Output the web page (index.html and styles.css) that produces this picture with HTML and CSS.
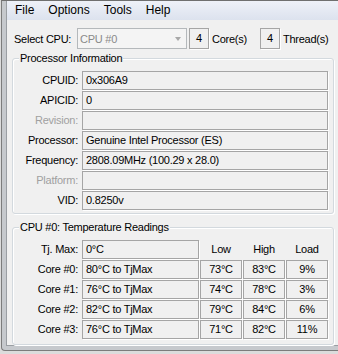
FILE: index.html
```html
<!DOCTYPE html>
<html>
<head>
<meta charset="utf-8">
<link rel="stylesheet" href="styles.css">
</head>
<body>
<div class="outer">
  <div class="frame">
    <div class="client">
      <div class="menubar">
        <span class="menu-item">File</span>
        <span class="menu-item">Options</span>
        <span class="menu-item">Tools</span>
        <span class="menu-item">Help</span>
      </div>
      <div class="select-row">
        <span class="select-label">Select CPU:</span>
        <div class="combo"><span class="combo-text">CPU #0</span><span class="combo-arrow"></span></div>
        <span class="field count-box">4</span>
        <span class="count-label count-label--cores">Core(s)</span>
        <span class="field count-box">4</span>
        <span class="count-label">Thread(s)</span>
      </div>
      <section class="group group--info">
        <div class="group-title">Processor Information</div>
        <div class="info-grid">
          <span class="label">CPUID:</span><span class="field">0x306A9</span>
          <span class="label">APICID:</span><span class="field">0</span>
          <span class="label label--disabled">Revision:</span><span class="field"></span>
          <span class="label">Processor:</span><span class="field">Genuine Intel Processor (ES)</span>
          <span class="label">Frequency:</span><span class="field">2808.09MHz (100.29 x 28.0)</span>
          <span class="label label--disabled">Platform:</span><span class="field"></span>
          <span class="label">VID:</span><span class="field">0.8250v</span>
        </div>
      </section>
      <section class="group group--temp">
        <div class="group-title">CPU #0: Temperature Readings</div>
        <div class="temp-grid">
          <span class="label">Tj. Max:</span><span class="field">0°C</span>
          <span class="head">Low</span><span class="head">High</span><span class="head">Load</span>

          <span class="label">Core #0:</span><span class="field">80°C to TjMax</span>
          <span class="field num">73°C</span><span class="field num">83°C</span><span class="field num">9%</span>

          <span class="label">Core #1:</span><span class="field">76°C to TjMax</span>
          <span class="field num">74°C</span><span class="field num">78°C</span><span class="field num">3%</span>

          <span class="label">Core #2:</span><span class="field">82°C to TjMax</span>
          <span class="field num">79°C</span><span class="field num">84°C</span><span class="field num">6%</span>

          <span class="label">Core #3:</span><span class="field">76°C to TjMax</span>
          <span class="field num">71°C</span><span class="field num">82°C</span><span class="field num">11%</span>
        </div>
      </section>
    </div>
  </div>
</div>
</body>
</html>
```

FILE: styles.css
```css
html, body {
  margin: 0;
  padding: 0;
}

body {
  width: 338px;
  height: 354px;
  overflow: hidden;
  font-family: "Liberation Sans", Arial, sans-serif;
  font-size: 11px;
  letter-spacing: -0.25px;
  color: #000;
  background: #dcdcdc;
}

.outer {
  box-sizing: border-box;
  height: 354px;
  padding: 0 0 3px 1px;
  background: #dcdcdc;
}

.frame {
  background: #c6c9cd;
  border-left: 1px solid #7c7c7c;
  border-top: 1px solid #6f6f6f;
  border-bottom: 1px solid #7c7c7c;
  border-bottom-left-radius: 4px;
  padding: 0 0 4px 4px;
}

.client {
  height: 344px;
  background: #f0f0f0;
  border-left: 1px solid #9a9ea3;
  border-bottom: 1px solid #9a9ea3;
  padding: 0 4px 0 5px;
  display: flex;
  flex-direction: column;
}

.menubar {
  height: 19px;
  margin: 0 -4px 0 -5px;
  padding-left: 1px;
  display: flex;
  background: linear-gradient(to bottom, #eef1f8, #dce2ee);
  font-size: 12px;
  letter-spacing: 0;
  line-height: 19px;
}

.menu-item {
  padding: 0 7px;
  color: #000;
}

.select-row {
  margin-top: 8px;
  height: 21px;
  padding-left: 2px;
  display: flex;
  align-items: center;
}

.select-label {
  width: 63px;
}

.combo {
  box-sizing: border-box;
  width: 110px;
  height: 21px;
  border: 1px solid #b4b8bb;
  background: #f4f4f4;
  display: flex;
  align-items: center;
  justify-content: space-between;
  padding: 0 5px 0 2px;
  color: #8a8a8a;
}

.combo-arrow {
  width: 0;
  height: 0;
  border-left: 3.5px solid transparent;
  border-right: 3.5px solid transparent;
  border-top: 4px solid #a8a8a8;
}

.field {
  box-sizing: border-box;
  height: 19px;
  border: 1px solid #a5a5a5;
  box-shadow: 1px 1px 0 #ffffff;
  padding-left: 3px;
  line-height: 17px;
  white-space: nowrap;
  overflow: hidden;
}

.count-box {
  width: 20px;
  height: 21px;
  line-height: 19px;
  padding: 0;
  text-align: center;
  margin-left: 2px;
}

.count-label {
  margin-left: 3px;
}

.count-label--cores {
  width: 46px;
}

.group {
  border: 1px solid #d3d9de;
  border-radius: 3px;
  box-shadow: inset 1px 1px 0 #ffffff, 1px 1px 0 #ffffff;
}

.group--info {
  margin-top: 9px;
  padding-bottom: 3px;
}

.group--temp {
  margin-top: 13px;
  padding-bottom: 5px;
}

.group-title {
  width: fit-content;
  height: 13px;
  line-height: 13px;
  margin: -7px 0 0 6px;
  padding: 0 1px;
  background: #f0f0f0;
}

.info-grid {
  margin-top: 6px;
  padding-right: 5px;
  display: grid;
  grid-template-columns: 68px 1fr;
  grid-auto-rows: 19px;
  column-gap: 1px;
  row-gap: 1px;
}

.temp-grid {
  margin-top: 6px;
  display: grid;
  grid-template-columns: 68px 117px 42px 42px 42px;
  grid-auto-rows: 19px;
  column-gap: 1px;
  row-gap: 1px;
}

.label {
  text-align: right;
  padding-right: 3px;
  line-height: 19px;
  white-space: nowrap;
}

.label--disabled {
  color: #a0a0a0;
}

.head {
  text-align: center;
  line-height: 19px;
}

.num {
  text-align: center;
  padding-left: 0;
}
```
